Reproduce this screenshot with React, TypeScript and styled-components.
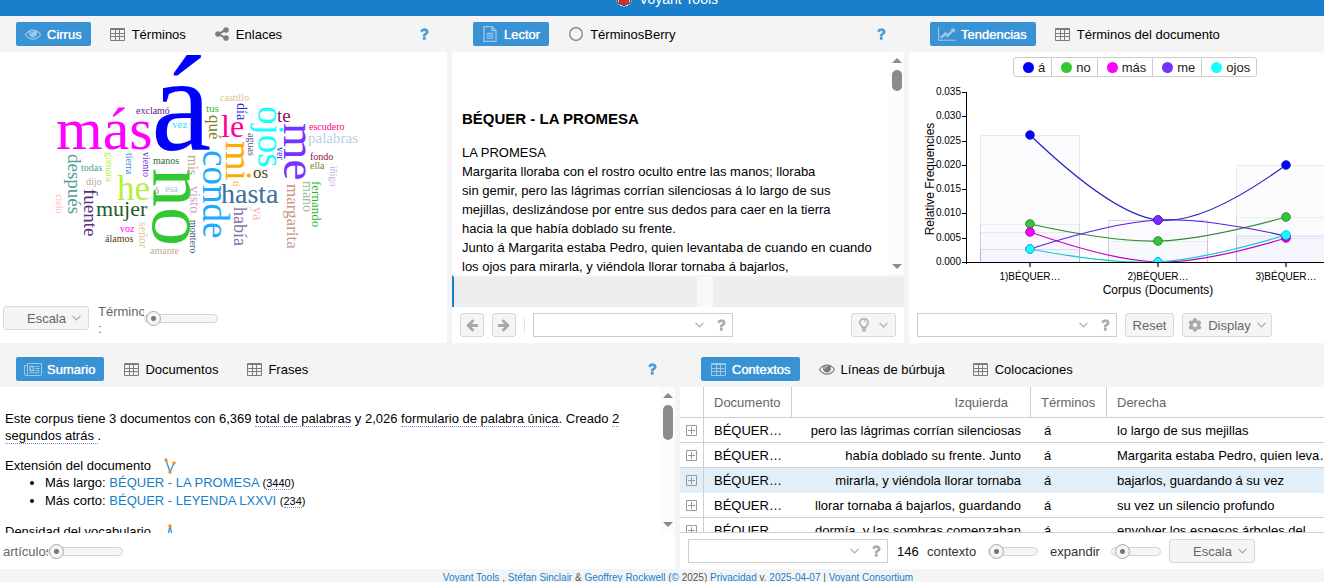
import React from 'react';
import styled, { createGlobalStyle, css } from 'styled-components';
import { FaCog } from 'react-icons/fa';

const BLUE = '#157fcc';
const SANS = '"Liberation Sans", Arial, sans-serif';

const GlobalStyle = createGlobalStyle`
  * { box-sizing: border-box; }
  body {
    margin: 0;
    overflow: hidden;
    background: #f4f4f4;
    color: #000;
    font: 13px/17px ${SANS};
  }
  button, input { font: inherit; }
  a { color: ${BLUE}; text-decoration: none; }
`;

/* ---------- page frame ---------- */

const Page = styled.div`
  display: grid;
  grid-template-rows: 16px minmax(0, 327fr) minmax(0, 226fr) 13px;
  height: 100vh;
  overflow: hidden;
`;

const Header = styled.header`
  display: flex;
  justify-content: center;
  align-items: flex-end;
  gap: 6px;
  padding: 0 0 9px 9px;
  overflow: hidden;
  background: #197fcb;
  color: #fff;
`;

const Title = styled.h1`
  margin: 0;
  font-size: 14px;
  font-weight: 400;
  line-height: 16px;
`;

const TopRow = styled.main`
  display: grid;
  grid-template-columns: minmax(0, 447fr) minmax(0, 452fr) minmax(0, 415fr);
  column-gap: 5px;
`;

const BottomRow = styled.section`
  display: grid;
  grid-template-columns: minmax(0, 675fr) minmax(0, 644fr);
  column-gap: 5px;
  padding-top: 8px;
`;

const Panel = styled.section`
  display: flex;
  flex-direction: column;
  min-width: 0;
  min-height: 0;
  overflow: hidden;
  background: #fff;
`;

const Footer = styled.footer`
  padding-left: 32px;
  text-align: center;
  font-size: 10px;
  line-height: 17px;
  white-space: nowrap;
  color: #555;
`;

/* ---------- tabs ---------- */

const TabBar = styled.nav<{ $inset?: boolean }>`
  display: flex;
  align-items: center;
  gap: 10px;
  flex: none;
  height: 36px;
  padding: 0 15px 0 ${p => (p.$inset ? 21 : 16)}px;
  background: #f4f4f4;
`;

const TabButton = styled.button<{ $active?: boolean }>`
  display: flex;
  align-items: center;
  gap: 6px;
  height: 24px;
  padding: 0 9px;
  border: 0;
  border-radius: 2px;
  background: transparent;
  color: #000;
  white-space: nowrap;
  svg { color: #7c7c7c; }
  ${p => p.$active && css`
    background: #3892d4;
    color: #fff;
    text-shadow: 0 0 1px #fff;
    svg { color: #9cc9ea; }
  `}
`;

const IconBox = styled.span`
  display: flex;
  justify-content: center;
  width: 16px;
  svg { flex: none; }
`;

const HelpButton = styled.button`
  display: flex;
  margin-left: auto;
  padding: 0;
  border: 0;
  background: none;
  color: #4b9cd8;
`;

/* ---------- toolbar controls ---------- */

const Toolbar = styled.div<{ $height?: number; $line?: boolean }>`
  display: flex;
  align-items: center;
  gap: 8px;
  flex: none;
  height: ${p => p.$height ?? 36}px;
  padding: 0 8px;
  background: #fff;
  border-top: ${p => (p.$line ? '1px solid #cfcfcf' : '0')};
`;

const CirrusToolbar = styled(Toolbar)`
  align-items: flex-start;
  gap: 9px;
  padding: 3px;
`;

const CompactToolbar = styled(Toolbar)`
  gap: 0;
  padding: 0 3px;
`;

const ToolButton = styled.button<{ $width?: number; $gap?: number }>`
  display: flex;
  align-items: center;
  justify-content: center;
  gap: ${p => p.$gap ?? 6}px;
  flex: none;
  width: ${p => (p.$width ? `${p.$width}px` : 'auto')};
  height: 24px;
  padding: 0 4px;
  border: 1px solid #d8d8d8;
  border-radius: 3px;
  background: #f5f5f5;
  color: #666;
  svg { color: #a9a9a9; }
`;

const ScaleButton = styled(ToolButton)`
  justify-content: flex-end;
  padding: 0 7px;
`;

const Separator = styled.span`
  width: 1px;
  height: 14px;
  background: #e1e1e1;
`;

const Combo = styled.div`
  display: flex;
  align-items: center;
  flex: none;
  width: 200px;
  height: 24px;
  padding-right: 3px;
  border: 1px solid #cfcfcf;
  background: #fff;
  color: #aaa;
  input {
    flex: 1;
    min-width: 0;
    height: 22px;
    border: 0;
    outline: 0;
    background: none;
  }
  button {
    display: flex;
    margin-right: 9px;
    padding: 0;
    border: 0;
    background: none;
    color: #aaa;
  }
`;

const Spring = styled.span`
  flex: 1;
`;

const SliderLabel = styled.label<{ $width: number }>`
  flex: none;
  width: ${p => p.$width}px;
  overflow: hidden;
  color: #666;
`;

const Slider = styled.input<{ $width: number }>`
  appearance: none;
  flex: none;
  width: ${p => p.$width}px;
  height: 15px;
  margin: 0;
  background: none;
  &::-webkit-slider-runnable-track {
    height: 9px;
    border: 1px solid #d4d4d4;
    border-radius: 5px;
    background: #f5f5f5;
  }
  &::-webkit-slider-thumb {
    appearance: none;
    width: 15px;
    height: 15px;
    margin-top: -4px;
    border: 1px solid #a8a8a8;
    border-radius: 50%;
    background: radial-gradient(circle, #777 0 2px, #f5f5f5 3px);
  }
`;

const TermsControl = styled.div`
  display: flex;
  align-items: center;
  height: 25px;
  label { height: 34px; padding-top: 1px; }
`;

const ContextLabel = styled.label`
  width: 53px;
  color: #333;
  & ~ & { margin-left: 4px; }
`;

const Count = styled.output`
  width: 22px;
  margin-left: 1px;
`;

/* ---------- scrollbar ---------- */

const ScrollTrack = styled.div`
  display: flex;
  flex-direction: column;
  align-items: center;
  flex: none;
  width: 15px;
  padding: 6px 0;
  background: #fcfcfc;
`;

const ScrollThumb = styled.div<{ $height: number }>`
  width: 10px;
  height: ${p => p.$height}px;
  margin: 7px 0 auto;
  border-radius: 5px;
  background: #8b8b8b;
`;

function Scrollbar({ thumb }: { thumb: number }) {
  return (
    <ScrollTrack aria-hidden>
      <svg width="10" height="5"><path d="M0 5 5 0l5 5z" fill="#8b8b8b" /></svg>
      <ScrollThumb $height={thumb} />
      <svg width="10" height="5"><path d="M0 0h10L5 5z" fill="#8b8b8b" /></svg>
    </ScrollTrack>
  );
}

/* ---------- icons ---------- */

const EyeIcon = () => (
  <svg width="16" height="16" viewBox="0 0 1792 1792" fill="currentColor">
    <path d="M1664 960q-152-236-381-353 61 104 61 225 0 185-131.5 316.5t-316.5 131.5-316.5-131.5-131.5-316.5q0-121 61-225-229 117-381 353 133 205 333.5 326.5t434.5 121.5 434.5-121.5 333.5-326.5zm-720-384q0-20-14-34t-34-14q-125 0-214.5 89.5t-89.5 214.5q0 20 14 34t34 14 34-14 14-34q0-86 61-147t147-61q20 0 34-14t14-34zm848 384q0 34-20 69-140 230-376.5 368.5t-499.5 138.5-499.5-139-376.5-368q-20-35-20-69t20-69q140-229 376.5-368t499.5-139 499.5 139 376.5 368q20 35 20 69z" />
  </svg>
);

const TableIcon = () => (
  <svg width="15" height="13" viewBox="0 0 15 13" fill="currentColor">
    <path
      fillRule="evenodd"
      d="M1 0h13a1 1 0 0 1 1 1v11a1 1 0 0 1-1 1H1a1 1 0 0 1-1-1V1a1 1 0 0 1 1-1zM1 2v3h4V2zm5 0v3h3V2zm4 0v3h4V2zM1 6v2h4V6zm5 0v2h3V6zm4 0v2h4V6zM1 9v3h4V9zm5 0v3h3V9zm4 0v3h4V9z"
    />
  </svg>
);

const ShareIcon = () => (
  <svg width="16" height="16" viewBox="0 0 1792 1792" fill="currentColor">
    <path d="M1344 1024q133 0 226.5 93.5t93.5 226.5-93.5 226.5-226.5 93.5-226.5-93.5-93.5-226.5q0-12 2-34l-360-180q-92 86-218 86-133 0-226.5-93.5t-93.5-226.5 93.5-226.5 226.5-93.5q126 0 218 86l360-180q-2-22-2-34 0-133 93.5-226.5t226.5-93.5 226.5 93.5 93.5 226.5-93.5 226.5-226.5 93.5q-126 0-218-86l-360 180q2 22 2 34t-2 34l360 180q92-86 218-86z" />
  </svg>
);

const QuestionIcon = () => (
  <svg width="16" height="16" viewBox="0 0 1792 1792" fill="currentColor">
    <path d="M1088 1256v240q0 16-12 28t-28 12h-240q-16 0-28-12t-12-28v-240q0-16 12-28t28-12h240q16 0 28 12t12 28zm316-600q0 54-15.5 101t-35 76.5-55 59.5-57.5 43.5-61 35.5q-41 23-68.5 65t-27.5 67q0 17-12 32.5t-28 15.5h-240q-15 0-25.5-18.5t-10.5-37.5v-45q0-83 65-156.5t143-108.5q59-27 84-56t25-76q0-42-46.5-74t-107.5-32q-65 0-108 29-35 25-107 115-13 16-31 16-12 0-25-8l-164-125q-13-10-15.5-25t5.5-28q160-266 464-266 80 0 161 31t146 83 106 127.5 41 158.5z" />
  </svg>
);

const ArrowIcon = ({ right }: { right?: boolean }) => (
  <svg width="16" height="16" viewBox="0 0 1792 1792" fill="currentColor">
    <path
      transform={right ? 'translate(1792 0) scale(-1 1)' : undefined}
      d="M1664 896v128q0 53-32.5 90.5t-84.5 37.5h-704l293 294q38 36 38 90t-38 90l-75 76q-37 37-90 37-52 0-91-37l-651-652q-37-37-37-90 0-52 37-91l651-650q38-38 91-38 52 0 90 38l75 74q38 38 38 91t-38 91l-293 293h704q52 0 84.5 37.5t32.5 90.5z"
    />
  </svg>
);

const FileIcon = () => (
  <svg width="14" height="16" viewBox="0 0 14 16" fill="none" stroke="currentColor" strokeWidth="1.3">
    <path d="M1 .7h8l4 4v10.600H1zM9 .7v4h4M3.500 7.500h7M3.500 9.800h7M3.500 12.200h7" />
  </svg>
);

const CircleIcon = () => (
  <svg width="14" height="14" viewBox="0 0 14 14" fill="none" stroke="currentColor" strokeWidth="1.2">
    <circle cx="7" cy="7" r="6.300" />
  </svg>
);

const LineChartIcon = () => (
  <svg width="18" height="16" viewBox="0 0 2048 1792" fill="currentColor">
    <path d="M2048 1536v128h-2048v-1536h128v1408h1920zm-128-1248v435q0 21-19.5 29.5t-35.5-7.5l-121-121-633 633q-10 10-23 10t-23-10l-233-233-416 416-192-192 585-585q10-10 23-10t23 10l233 233 464-464-121-121q-16-16-7.5-35.5t29.5-19.5h435q14 0 23 9t9 23z" />
  </svg>
);

const NewsIcon = () => (
  <svg width="18" height="13" viewBox="0 0 18 13" fill="none" stroke="currentColor">
    <path d="M3.500.5h14v11a1 1 0 0 1-1 1H2a1.500 1.500 0 0 1-1.500-1.500V2.500h3M3.500.5V11A1.500 1.500 0 0 1 2 12.500M11.500 3.500h4M11.500 5.500h4M11.500 7.500h4M5.500 9.800h10" />
    <path d="M6 3.500h3.500v4H6z" strokeWidth="1.4" />
  </svg>
);

const BulbIcon = () => (
  <svg width="10" height="14" viewBox="0 0 10 14" fill="none" stroke="currentColor" strokeWidth="1.4">
    <path d="M3.300 9.500C3.200 7.800.8 7 .8 4.600a4.200 3.900 0 0 1 8.400 0C9.200 7 6.800 7.800 6.700 9.500z" />
    <path d="M5 2.700c1.300 0 2.100.7 2.100 1.700" strokeWidth="1" />
    <path d="M3 11.200h4M3.500 13h3" />
  </svg>
);

const Chevron = () => (
  <svg width="9" height="6" viewBox="0 0 9 6" fill="none" stroke="currentColor" strokeWidth="1.2">
    <path d="M.5.8l4 4 4-4" />
  </svg>
);

const Logo = () => (
  <svg width="18" height="18" viewBox="0 0 18 18">
    <circle cx="9" cy="9" r="8.500" fill="#fff" />
    <path d="M1.500 9a7.500 7.500 0 0 0 4 6.500M16.500 9a7.500 7.500 0 0 1-4 6.500" fill="none" stroke="#6d2226" strokeWidth="1.3" />
    <ellipse cx="9" cy="9.500" rx="5" ry="7" fill="#c4303c" stroke="#8d2730" />
  </svg>
);

/* ---------- shared pieces ---------- */

type TabItem = { label: string; icon: React.ReactNode };

function Tabs({ items, inset, help }: { items: TabItem[]; inset?: boolean; help?: boolean }) {
  return (
    <TabBar $inset={inset}>
      {items.map((t, i) => (
        <TabButton key={t.label} type="button" $active={i === 0}>
          <IconBox>{t.icon}</IconBox>
          {t.label}
        </TabButton>
      ))}
      {help && (
        <HelpButton type="button" aria-label="Ayuda"><QuestionIcon /></HelpButton>
      )}
    </TabBar>
  );
}

function TermSearch() {
  return (
    <Combo>
      <input type="text" aria-label="Buscar" />
      <button type="button" aria-label="Abrir lista"><Chevron /></button>
      <QuestionIcon />
    </Combo>
  );
}

/* ---------- Cirrus ---------- */

type Word = [text: string, x: number, y: number, size: number, color: string];

const ACROSS: Word[] = [
  ['más', 56, 97, 60, '#ff00ff'],
  ['á', 151, 98, 136, '#0000ff'],
  ['exclamó', 136, 62, 10, '#5a1a8c'],
  ['vez', 172, 76, 11, '#14e6ff'],
  ['tus', 206, 60, 11, '#32b832'],
  ['castillo', 220, 49, 10, '#e0c080'],
  ['le', 221, 85, 32, '#ff0096'],
  ['te', 277, 70, 19, '#8c1464'],
  ['escudero', 309, 78, 10, '#ff0080'],
  ['palabras', 308, 91, 15, '#b4d2e6'],
  ['fondo', 310, 108, 10, '#8c1450'],
  ['ella', 310, 117, 10, '#827d28'],
  ['todas', 81, 119, 10, '#50a096'],
  ['dijo', 86, 133, 10, '#b4aa9b'],
  ['he', 117, 148, 35, '#b4f03c'],
  ['manos', 153, 112, 10, '#1e6e32'],
  ['esa', 165, 140, 10, '#a0c8dc'],
  ['ó', 154, 142, 10, '#be6e64'],
  ['mujer', 96, 164, 22, '#1e5a28'],
  ['voz', 120, 180, 10, '#ff00ff'],
  ['álamos', 105, 190, 10, '#5a3c0a'],
  ['amante', 150, 202, 10, '#beaa96'],
  ['os', 253, 126, 17, '#5a4614'],
  ['hasta', 221, 151, 28, '#3c6ea0'],
];

const DOWN: Word[] = [
  ['no', 153, 116, 78, '#32c832'],
  ['después', 68, 102, 19, '#50a096'],
  ['cielo', 56, 142, 10, '#ffb4aa'],
  ['fuente', 84, 137, 19, '#5a2d82'],
  ['gómara', 106, 100, 10, '#b4f03c'],
  ['tierra', 126, 101, 10, '#3282d2'],
  ['viento', 143, 100, 10, '#5a1ed2'],
  ['mis', 188, 103, 14, '#bea58c'],
  ['visto', 190, 134, 14, '#c8a5c8'],
  ['montero', 190, 168, 10, '#1e466e'],
  ['señor', 139, 170, 12, '#dcc896'],
  ['conde', 203, 98, 37, '#1eaaff'],
  ['qué', 209, 63, 17, '#827d28'],
  ['día', 237, 51, 14, '#2828dc'],
  ['mi', 226, 89, 38, '#ffaa00'],
  ['ojos', 258, 54, 37, '#14ffff'],
  ['aguas', 248, 81, 10, '#5a5082'],
  ['me', 284, 71, 47, '#7832ff'],
  ['ver', 277, 95, 10, '#1414ff'],
  ['íñigo', 330, 114, 10, '#c8aadc'],
  ['mano', 303, 129, 14, '#a0bea0'],
  ['fernando', 312, 129, 13, '#32b432'],
  ['margarita', 287, 132, 17, '#c89682'],
  ['ti', 233, 129, 10, '#ffaa00'],
  ['ya', 253, 155, 14, '#ffb4b4'],
  ['había', 234, 155, 18, '#826eaa'],
];

const Cloud = styled.svg`
  display: block;
  flex: 1;
  min-height: 0;
  width: 100%;
  font-family: "Palatino Linotype", "Book Antiqua", Palatino, "Liberation Serif", serif;
`;

function Cirrus() {
  return (
    <Panel>
      <Tabs
        help
        items={[
          { label: 'Cirrus', icon: <EyeIcon /> },
          { label: 'Términos', icon: <TableIcon /> },
          { label: 'Enlaces', icon: <ShareIcon /> },
        ]}
      />
      <Cloud viewBox="0 0 447 251" preserveAspectRatio="xMinYMin meet">
        {ACROSS.map(([t, x, y, s, c]) => (
          <text key={t} x={x} y={y} fontSize={s} fill={c}>{t}</text>
        ))}
        {DOWN.map(([t, x, y, s, c]) => (
          <text key={t} transform={`translate(${x} ${y}) rotate(90)`} fontSize={s} fill={c}>{t}</text>
        ))}
      </Cloud>
      <CirrusToolbar $height={40}>
        <ScaleButton type="button" $width={86}>Escala <Chevron /></ScaleButton>
        <TermsControl>
          <SliderLabel htmlFor="terms" $width={46}>Términos :</SliderLabel>
          <Slider id="terms" type="range" $width={74} min={0} max={100} defaultValue={2} />
        </TermsControl>
      </CirrusToolbar>
    </Panel>
  );
}

/* ---------- Reader ---------- */

const Scroller = styled.div`
  display: flex;
  flex: 1;
  min-height: 0;
  overflow: hidden;
`;

const ReaderText = styled.article`
  flex: 1;
  padding: 57px 10px 0;
  line-height: 19px;
  white-space: nowrap;
  overflow: hidden;
  h2 { margin: 0 0 15px; font-size: 15px; line-height: 19px; }
  p { margin: 0; }
`;

const DocStrip = styled.div`
  display: grid;
  grid-template-columns: 243fr 16fr 191fr;
  flex: none;
  height: 32px;
  border-top: 2px solid #f6f6f6;
  border-left: 2px solid ${BLUE};
  background: #ededed;
`;

const DocGap = styled.span`
  grid-column: 2;
  background: #f9f9f9;
`;

function Reader() {
  return (
    <Panel>
      <Tabs
        inset
        help
        items={[
          { label: 'Lector', icon: <FileIcon /> },
          { label: 'TérminosBerry', icon: <CircleIcon /> },
        ]}
      />
      <Scroller>
        <ReaderText>
          <h2>BÉQUER - LA PROMESA</h2>
          <p>LA PROMESA</p>
          <p>
            Margarita lloraba con el rostro oculto entre las manos; lloraba<br />
            sin gemir, pero las lágrimas corrían silenciosas á lo largo de sus<br />
            mejillas, deslizándose por entre sus dedos para caer en la tierra<br />
            hacia la que había doblado su frente.
          </p>
          <p>
            Junto á Margarita estaba Pedro, quien levantaba de cuando en cuando<br />
            los ojos para mirarla, y viéndola llorar tornaba á bajarlos,
          </p>
        </ReaderText>
        <Scrollbar thumb={21} />
      </Scroller>
      <DocStrip><DocGap /></DocStrip>
      <Toolbar>
        <ToolButton type="button" $width={24} aria-label="Anterior"><ArrowIcon /></ToolButton>
        <ToolButton type="button" $width={24} aria-label="Siguiente"><ArrowIcon right /></ToolButton>
        <Separator />
        <TermSearch />
        <Spring />
        <ToolButton type="button" $width={45} $gap={10} aria-label="Entidades">
          <BulbIcon /> <Chevron />
        </ToolButton>
      </Toolbar>
    </Panel>
  );
}

/* ---------- Trends ---------- */

const SERIES = [
  { name: 'á', color: '#0000ff', line: '#2323be', y: [83, 168, 113] },
  { name: 'no', color: '#32c832', line: '#2d8c32', y: [172, 189, 165] },
  { name: 'más', color: '#ff00ff', line: '#be00be', y: [180, 210, 186] },
  { name: 'me', color: '#7832ff', line: '#5a19dc', y: [197, 168, 184] },
  { name: 'ojos', color: '#14ffff', line: '#14c8d2', y: [197, 210, 183] },
];
const XS = [121, 249, 377];
const AXIS_Y = 210;

const Legend = styled.ul`
  display: flex;
  align-self: flex-start;
  flex: none;
  height: 20px;
  margin: 5px 0 0 104px;
  padding: 0;
  border: 1px solid #ccc;
  border-radius: 3px;
  list-style: none;
  color: #222;
`;

const LegendItem = styled.li<{ $color: string }>`
  display: flex;
  align-items: center;
  gap: 4px;
  padding: 0 6px 0 9px;
  & + & { border-left: 1px solid #ccc; }
  &::before {
    content: '';
    width: 11px;
    height: 11px;
    border-radius: 50%;
    background: ${p => p.$color};
  }
`;

const ChartArea = styled.div`
  flex: 1;
  min-height: 0;
  overflow: hidden;
`;

const Chart = styled.svg`
  display: block;
  font-family: ${SANS};
`;

function curve([a, b, c]: number[]) {
  const slope = (c - a) * 0.176;
  return `M${XS[0]} ${a}Q${XS[1] - 45} ${b - slope} ${XS[1]} ${b}Q${XS[1] + 45} ${b + slope} ${XS[2]} ${c}`;
}

function Trends() {
  return (
    <Panel>
      <Tabs
        inset
        items={[
          { label: 'Tendencias', icon: <LineChartIcon /> },
          { label: 'Términos del documento', icon: <TableIcon /> },
        ]}
      />
      <Legend>
        {SERIES.map(s => <LegendItem key={s.name} $color={s.color}>{s.name}</LegendItem>)}
      </Legend>
      <ChartArea>
        <Chart width="452" height="230" viewBox="0 25 452 230">
          {SERIES.map(s => s.y.map((y, i) => y < AXIS_Y && (
            <rect
              key={s.name + i}
              x={XS[i] - 49.5}
              y={y + 0.5}
              width="99"
              height={AXIS_Y - y}
              fill={s.color}
              fillOpacity="0.012"
              stroke={s.line}
              strokeOpacity="0.1"
            />
          )))}
          <g fontSize="10" textAnchor="end">
            {[0, 1, 2, 3, 4, 5, 6, 7].map(i => {
              const y = Math.round(AXIS_Y - (i * 170) / 7);
              return (
                <g key={i}>
                  <path d={`M53 ${y + 0.5}h5`} stroke="#000" />
                  <text x="52" y={y + 3}>{(i * 0.005).toFixed(3)}</text>
                </g>
              );
            })}
          </g>
          {SERIES.map(s => (
            <path key={s.name} d={curve(s.y)} fill="none" stroke={s.line} strokeWidth="1.2" />
          ))}
          {SERIES.map(s => s.y.map((y, i) => (
            <circle key={s.name + i} cx={XS[i]} cy={y} r="4.3" fill={s.color} stroke={s.line} />
          )))}
          <path d="M56 211h396v4H56z" fill="#fff" />
          <path d="M57.500 40v172M57 210.500h395" fill="none" stroke="#000" />
          {XS.map((x, i) => (
            <g key={x}>
              <path d={`M${x} 211v4`} stroke="#666" strokeWidth="2" />
              <text x={x} y="228" fontSize="10" textAnchor="middle">{`${i + 1})BÉQUER…`}</text>
            </g>
          ))}
          <text x="249" y="242" fontSize="12" textAnchor="middle">Corpus (Documents)</text>
          <text transform="translate(25 127) rotate(-90)" fontSize="12" textAnchor="middle">
            Relative Frequencies
          </text>
        </Chart>
      </ChartArea>
      <Toolbar>
        <TermSearch />
        <ToolButton type="button" $width={49}>Reset</ToolButton>
        <ToolButton type="button" $width={90}>
          <FaCog size={14} /> Display <Chevron />
        </ToolButton>
      </Toolbar>
    </Panel>
  );
}

/* ---------- Summary ---------- */

const SummaryText = styled.div`
  flex: 1;
  min-width: 0;
  padding: 23px 5px 0;
  overflow: hidden;
  p { margin: 0; }
  ul { margin: 0; padding-left: 40px; line-height: 18px; }
  small { font-size: 11px; }
`;

const Dotted = styled.span`
  border-bottom: 1px dotted #8a7fe0;
`;

const SummaryHeading = styled.h3`
  display: flex;
  align-items: center;
  gap: 13px;
  height: 17px;
  margin: 13px 0 0;
  font-size: 13px;
  font-weight: 400;
`;

const Spark = ({ flip }: { flip?: boolean }) => (
  <svg width="12" height="16" viewBox="0 0 12 16">
    <path
      d={flip ? 'M3 15 6 2l3 13' : 'M2 2l4 12 4-9'}
      fill="none"
      stroke="#3892d4"
      strokeWidth="1.3"
    />
    {(flip ? [[6, 2]] : [[2, 2], [6, 14], [10, 5]]).map(([x, y]) => (
      <circle key={x} cx={x} cy={y} r="1.700" fill="#ff8c14" />
    ))}
  </svg>
);

function Summary() {
  return (
    <Panel>
      <Tabs
        help
        items={[
          { label: 'Sumario', icon: <NewsIcon /> },
          { label: 'Documentos', icon: <TableIcon /> },
          { label: 'Frases', icon: <TableIcon /> },
        ]}
      />
      <Scroller>
        <SummaryText>
          <p>
            Este corpus tiene 3 documentos con 6,369 <Dotted>total de palabras</Dotted> y 2,026{' '}
            <Dotted>formulario de palabra única</Dotted>. Creado <Dotted>2<br />segundos atrás </Dotted>.
          </p>
          <SummaryHeading>Extensión del documento <Spark /></SummaryHeading>
          <ul>
            <li>Más largo: <a href="#promesa">BÉQUER - LA PROMESA</a> <small>(<Dotted>3440</Dotted>)</small></li>
            <li>Más corto: <a href="#leyenda">BÉQUER - LEYENDA LXXVI</a> <small>(<Dotted>234</Dotted>)</small></li>
          </ul>
          <SummaryHeading>Densidad del vocabulario <Spark flip /></SummaryHeading>
        </SummaryText>
        <Scrollbar thumb={35} />
      </Scroller>
      <CompactToolbar>
        <SliderLabel htmlFor="items" $width={45}>artículos</SliderLabel>
        <Slider id="items" type="range" $width={75} min={0} max={100} defaultValue={0} />
      </CompactToolbar>
    </Panel>
  );
}

/* ---------- Contexts ---------- */

const ROWS = [
  ['pero las lágrimas corrían silenciosas', 'lo largo de sus mejillas'],
  ['había doblado su frente. Junto', 'Margarita estaba Pedro, quien leva…'],
  ['mirarla, y viéndola llorar tornaba', 'bajarlos, guardando á su vez'],
  ['llorar tornaba á bajarlos, guardando', 'su vez un silencio profundo'],
  ['dormía, y las sombras comenzaban', 'envolver los espesos árboles del'],
];

const Grid = styled.table`
  flex: 1;
  align-self: flex-start;
  width: 100%;
  border-collapse: separate;
  border-spacing: 0;
  table-layout: fixed;
  th, td {
    padding: 0 10px;
    overflow: hidden;
    white-space: nowrap;
    text-align: left;
    font-weight: 400;
    border-bottom: 1px solid #cfcfcf;
  }
  th { height: 31px; border-right: 1px solid #cfcfcf; color: #666; }
  td { height: 25px; }
  th:first-child, td:first-child { padding: 0 0 0 6px; border-right: 1px solid #cfcfcf; }
  th:nth-child(3) { padding-right: 22px; }
  th:nth-child(3), td:nth-child(3) { text-align: right; }
  td:nth-child(4) { padding-left: 13px; }
  th:last-child, td:last-child { padding-right: 0; border-right: 0; }
`;

const Row = styled.tr<{ $selected: boolean }>`
  background: ${p => (p.$selected ? '#e2eff8' : '#fff')};
  td { border-bottom-color: ${p => (p.$selected ? '#e2eff8' : '#cfcfcf')}; }
`;

const ExpandButton = styled.button`
  display: flex;
  padding: 0;
  border: 0;
  background: none;
`;

function Contexts() {
  return (
    <Panel>
      <Tabs
        inset
        items={[
          { label: 'Contextos', icon: <TableIcon /> },
          { label: 'Líneas de búrbuja', icon: <EyeIcon /> },
          { label: 'Colocaciones', icon: <TableIcon /> },
        ]}
      />
      <Scroller>
        <Grid>
          <colgroup>
            <col width="24" />
            <col width="88" />
            <col width="239" />
            <col width="76" />
            <col />
          </colgroup>
          <thead>
            <tr>
              <th aria-label="Expandir" />
              <th>Documento</th>
              <th>Izquierda</th>
              <th>Términos</th>
              <th>Derecha</th>
            </tr>
          </thead>
          <tbody>
            {ROWS.map(([left, right], i) => (
              <Row key={left} $selected={i === 2}>
                <td>
                  <ExpandButton type="button" aria-label="Expandir fila">
                    <svg width="11" height="11" fill="none" stroke="#999">
                      <path d="M.5.5h10v10H.5zM2 5.500h7M5.500 2v7" />
                    </svg>
                  </ExpandButton>
                </td>
                <td>BÉQUER…</td>
                <td>{left}</td>
                <td>á</td>
                <td>{right}</td>
              </Row>
            ))}
          </tbody>
        </Grid>
      </Scroller>
      <Toolbar $height={37} $line>
        <TermSearch />
        <Count>146</Count>
        <ContextLabel htmlFor="context">contexto</ContextLabel>
        <Slider id="context" type="range" $width={50} min={0} max={100} defaultValue={1} />
        <ContextLabel htmlFor="expand">expandir</ContextLabel>
        <Slider id="expand" type="range" $width={50} min={0} max={100} defaultValue={10} />
        <ScaleButton type="button" $width={86}>Escala <Chevron /></ScaleButton>
      </Toolbar>
    </Panel>
  );
}

export default function App() {
  return (
    <>
      <GlobalStyle />
      <Page>
        <Header>
          <Logo />
          <Title>Voyant Tools</Title>
        </Header>
        <TopRow>
          <Cirrus />
          <Reader />
          <Trends />
        </TopRow>
        <BottomRow>
          <Summary />
          <Contexts />
        </BottomRow>
        <Footer>
          <a href="#voyant">Voyant Tools</a> , <a href="#sinclair">Stéfan Sinclair</a> &amp;{' '}
          <a href="#rockwell">Geoffrey Rockwell</a> (<a href="#license">©</a> 2025){' '}
          <a href="#privacy">Privacidad</a> v. <a href="#version">2025-04-07</a> |{' '}
          <a href="#consortium">Voyant Consortium</a>
        </Footer>
      </Page>
    </>
  );
}
